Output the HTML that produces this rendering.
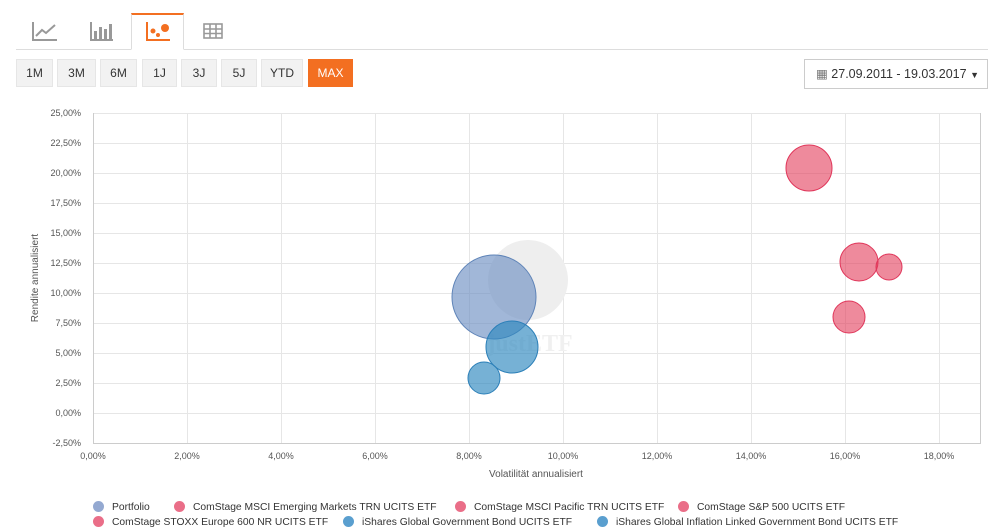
<!DOCTYPE html>
<html><head><meta charset="utf-8"><style>
*{margin:0;padding:0;box-sizing:border-box}
body{width:1000px;height:531px;background:#fff;font-family:"Liberation Sans",sans-serif;position:relative;overflow:hidden;color:#333}
.tabline{position:absolute;left:16px;right:12px;top:49px;height:1px;background:#ddd}
.tab{position:absolute;top:13px;width:53px;height:37px}
.tab.act{border:1px solid #ddd;border-top:2px solid #f36f21;border-bottom:1px solid #fff;background:#fff}
.btn{position:absolute;top:59px;height:28px;background:#f2f2f2;border:1px solid #e6e6e6;font-size:12px;line-height:26px;text-align:center;color:#333}
.btn.act{background:#f36f21;color:#fff;border-color:#f36f21}
.date{position:absolute;left:804px;top:59px;width:184px;height:30px;border:1px solid #ccc;font-size:12.5px;line-height:28px;padding-left:11px;color:#333}
.lg{position:absolute;font-size:10.3px;color:#333;white-space:nowrap}
.lg i{display:inline-block;width:11px;height:11px;border-radius:50%;vertical-align:-2px;margin-right:8px}
</style></head><body>
<div class="tabline"></div>
<div class="tab act" style="left:131px"></div>
<svg style="position:absolute;left:0;top:0" width="260" height="50">
<g fill="none" stroke="#999" stroke-width="2"><path d="M33 22V40H57"/><path d="M36 36L42 30L46 33L55 25"/></g>
<g fill="#999"><rect x="90" y="22" width="2" height="18"/><rect x="90" y="39" width="23" height="2"/><rect x="94" y="31" width="3" height="8"/><rect x="99" y="27" width="3" height="12"/><rect x="104" y="29" width="3" height="10"/><rect x="109" y="24" width="3" height="15"/></g>
<g fill="#f36f21"><rect x="146" y="22" width="2" height="18"/><rect x="146" y="39" width="24" height="2"/><circle cx="153" cy="31" r="2.5"/><circle cx="158" cy="35" r="2"/><circle cx="165" cy="28" r="4"/></g>
<g fill="none" stroke="#999" stroke-width="1.6"><rect x="204" y="24" width="18" height="14"/><path d="M204 29H222M204 33.5H222M210 24V38M216 24V38"/></g>
</svg>
<div class="btn" style="left:16px;width:37px">1M</div>
<div class="btn" style="left:57px;width:39px">3M</div>
<div class="btn" style="left:100px;width:37px">6M</div>
<div class="btn" style="left:142px;width:35px">1J</div>
<div class="btn" style="left:181px;width:36px">3J</div>
<div class="btn" style="left:221px;width:36px">5J</div>
<div class="btn" style="left:261px;width:42px">YTD</div>
<div class="btn act" style="left:308px;width:45px">MAX</div>
<div class="date"><span style="color:#777">&#9638;</span> 27.09.2011 - 19.03.2017 <span style="font-size:9px">&#9660;</span></div>
<svg style="position:absolute;left:0;top:0" width="1000" height="531" font-family="Liberation Sans" font-size="9" fill="#555">
<g stroke="#e6e6e6" stroke-width="1">
<path d="M93 113.5H980M93 143.5H980M93 173.5H980M93 203.5H980M93 233.5H980M93 263.5H980M93 293.5H980M93 323.5H980M93 353.5H980M93 383.5H980M93 413.5H980"/>
<path d="M187.5 113V443M281.5 113V443M375.5 113V443M469.5 113V443M563.5 113V443M657.5 113V443M751.5 113V443M845.5 113V443M939.5 113V443"/>
</g>
<path d="M93.5 113V443.5H980.5V113" stroke="#ccc" fill="none"/>
<g text-anchor="end">
<text x="81" y="116">25,00%</text><text x="81" y="146">22,50%</text><text x="81" y="176">20,00%</text><text x="81" y="206">17,50%</text><text x="81" y="236">15,00%</text><text x="81" y="266">12,50%</text><text x="81" y="296">10,00%</text><text x="81" y="326">7,50%</text><text x="81" y="356">5,00%</text><text x="81" y="386">2,50%</text><text x="81" y="416">0,00%</text><text x="81" y="446">-2,50%</text>
</g>
<g text-anchor="middle">
<text x="93" y="459">0,00%</text><text x="187" y="459">2,00%</text><text x="281" y="459">4,00%</text><text x="375" y="459">6,00%</text><text x="469" y="459">8,00%</text><text x="563" y="459">10,00%</text><text x="657" y="459">12,00%</text><text x="751" y="459">14,00%</text><text x="845" y="459">16,00%</text><text x="939" y="459">18,00%</text>
<text x="536" y="477" font-size="10">Volatilität annualisiert</text>
<text transform="translate(38 278) rotate(-90)" font-size="10">Rendite annualisiert</text>
</g>
<circle cx="528" cy="280" r="40" fill="#eee"/>
<text x="530" y="351" font-size="24" font-family="Liberation Serif" font-weight="bold" fill="#f0f0f0" text-anchor="middle">justETF</text>
<g fill="rgba(226,60,90,0.6)" stroke="#e0365a" stroke-width="1">
<circle cx="809" cy="168" r="23"/><circle cx="859" cy="262" r="19"/><circle cx="889" cy="267" r="13"/><circle cx="849" cy="317" r="16"/>
</g>
<circle cx="494" cy="297" r="42" fill="rgba(110,145,195,0.65)" stroke="#5f84b8"/>
<circle cx="512" cy="347" r="26" fill="rgba(45,135,190,0.65)" stroke="#2b7fb8"/>
<circle cx="484" cy="378" r="16" fill="rgba(45,135,190,0.65)" stroke="#2b7fb8"/>
</svg>
<div class="lg" style="left:93px;top:501px"><i style="background:#94a9d1"></i>Portfolio</div>
<div class="lg" style="left:174px;top:501px"><i style="background:#ea6e88"></i>ComStage MSCI Emerging Markets TRN UCITS ETF</div>
<div class="lg" style="left:455px;top:501px"><i style="background:#ea6e88"></i>ComStage MSCI Pacific TRN UCITS ETF</div>
<div class="lg" style="left:678px;top:501px"><i style="background:#ea6e88"></i>ComStage S&amp;P 500 UCITS ETF</div>
<div class="lg" style="left:93px;top:516px"><i style="background:#ea6e88"></i>ComStage STOXX Europe 600 NR UCITS ETF</div>
<div class="lg" style="left:343px;top:516px"><i style="background:#5a9fcf"></i>iShares Global Government Bond UCITS ETF</div>
<div class="lg" style="left:597px;top:516px"><i style="background:#5a9fcf"></i>iShares Global Inflation Linked Government Bond UCITS ETF</div>
</body></html>
